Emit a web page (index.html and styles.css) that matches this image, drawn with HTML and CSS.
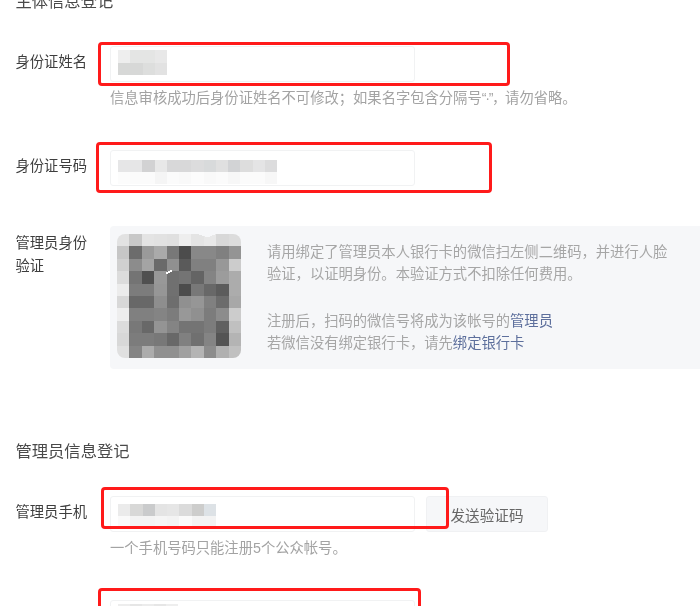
FILE: index.html
```html
<!DOCTYPE html>
<html lang="zh-CN">
<head>
<meta charset="utf-8">
<title>主体信息登记</title>
<link rel="stylesheet" href="styles.css">
</head>
<body>
<main class="page">
  <h2 class="section-title section-title--first">主体信息登记</h2>

  <div class="row">
    <div class="label">身份证姓名</div>
    <div class="field">
      <div class="input">
        <svg class="mosaic" width="49" height="25" viewBox="0 0 49 25" shape-rendering="crispEdges" aria-hidden="true">
          <rect x="0" y="0" width="12.25" height="12.5" fill="#eeeeee"/><rect x="12.25" y="0" width="12.25" height="12.5" fill="#e4e5e4"/><rect x="24.5" y="0" width="12.25" height="12.5" fill="#e4e5e4"/><rect x="36.75" y="0" width="12.25" height="12.5" fill="#e8e8e8"/>
          <rect x="0" y="12.5" width="12.25" height="12.5" fill="#d7d8d7"/><rect x="12.25" y="12.5" width="12.25" height="12.5" fill="#d7d8d7"/><rect x="24.5" y="12.5" width="12.25" height="12.5" fill="#dddedd"/><rect x="36.75" y="12.5" width="12.25" height="12.5" fill="#e2e2e2"/>
        </svg>
      </div>
      <p class="help">信息审核成功后身份证姓名不可修改；如果名字包含分隔号<span class="tight">“·”，</span>请勿省略。</p>
    </div>
  </div>

  <div class="row row--id">
    <div class="label">身份证号码</div>
    <div class="field">
      <div class="input">
        <svg class="mosaic mosaic--id" width="159" height="24" viewBox="0 0 13 2" preserveAspectRatio="none" shape-rendering="crispEdges" aria-hidden="true">
          <rect x="0" y="0" width="1" height="1" fill="#e6e6e7"/><rect x="1" y="0" width="1" height="1" fill="#e6e6e7"/><rect x="2" y="0" width="1" height="1" fill="#d2d2d3"/><rect x="3" y="0" width="1" height="1" fill="#e8e8e8"/><rect x="4" y="0" width="1" height="1" fill="#d8d8d9"/><rect x="5" y="0" width="1" height="1" fill="#d8d8d9"/><rect x="6" y="0" width="1" height="1" fill="#dcdcdd"/><rect x="7" y="0" width="1" height="1" fill="#d8dadb"/><rect x="8" y="0" width="1" height="1" fill="#e0e0e0"/><rect x="9" y="0" width="1" height="1" fill="#d2d3d5"/><rect x="10" y="0" width="1" height="1" fill="#dddddd"/><rect x="11" y="0" width="1" height="1" fill="#e4e4e5"/><rect x="12" y="0" width="1" height="1" fill="#dcdcdd"/>
          <rect x="0" y="1" width="1" height="1" fill="#fcfcfc"/><rect x="1" y="1" width="1" height="1" fill="#fbfbfb"/><rect x="2" y="1" width="1" height="1" fill="#fbfbfb"/><rect x="3" y="1" width="1" height="1" fill="#f5f5f5"/><rect x="4" y="1" width="1" height="1" fill="#fbfbfb"/><rect x="5" y="1" width="1" height="1" fill="#f9f9f9"/><rect x="6" y="1" width="1" height="1" fill="#fcfcfc"/><rect x="7" y="1" width="1" height="1" fill="#f9f9f9"/><rect x="8" y="1" width="1" height="1" fill="#fbfbfb"/><rect x="9" y="1" width="1" height="1" fill="#f7f7f7"/><rect x="10" y="1" width="1" height="1" fill="#fbfbfb"/><rect x="11" y="1" width="1" height="1" fill="#fbfbfb"/><rect x="12" y="1" width="1" height="1" fill="#f7f7f7"/>
        </svg>
      </div>
    </div>
  </div>

  <div class="row row--verify">
    <div class="label label--multi">管理员身份<br>验证</div>
    <div class="panel">
      <svg class="qr" width="124" height="124" viewBox="0 0 10 10" shape-rendering="crispEdges" aria-hidden="true">
        <g>
          <rect x="0" y="0" width="1" height="1" fill="#e2e2e2"/><rect x="1" y="0" width="1" height="1" fill="#c8c8c8"/><rect x="2" y="0" width="1" height="1" fill="#e4e4e4"/><rect x="3" y="0" width="1" height="1" fill="#e2e2e2"/><rect x="4" y="0" width="1" height="1" fill="#e0e0e0"/><rect x="5" y="0" width="1" height="1" fill="#eeeeee"/><rect x="6" y="0" width="1" height="1" fill="#e4e4e4"/><rect x="7" y="0" width="1" height="1" fill="#e8e8e8"/><rect x="8" y="0" width="1" height="1" fill="#d8d8d8"/><rect x="9" y="0" width="1" height="1" fill="#dcdcdc"/>
          <rect x="0" y="1" width="1" height="1" fill="#c6c6c6"/><rect x="1" y="1" width="1" height="1" fill="#6c6c6c"/><rect x="2" y="1" width="1" height="1" fill="#9a9a9a"/><rect x="3" y="1" width="1" height="1" fill="#aaaaaa"/><rect x="4" y="1" width="1" height="1" fill="#787878"/><rect x="5" y="1" width="1" height="1" fill="#4c4c4c"/><rect x="6" y="1" width="1" height="1" fill="#888888"/><rect x="7" y="1" width="1" height="1" fill="#888888"/><rect x="8" y="1" width="1" height="1" fill="#808080"/><rect x="9" y="1" width="1" height="1" fill="#949494"/>
          <rect x="0" y="2" width="1" height="1" fill="#d0d0d0"/><rect x="1" y="2" width="1" height="1" fill="#8c8c8c"/><rect x="2" y="2" width="1" height="1" fill="#a4a4a4"/><rect x="3" y="2" width="1" height="1" fill="#6a6a6a"/><rect x="4" y="2" width="1" height="1" fill="#909090"/><rect x="5" y="2" width="1" height="1" fill="#5a5a5a"/><rect x="6" y="2" width="1" height="1" fill="#808080"/><rect x="7" y="2" width="1" height="1" fill="#808080"/><rect x="8" y="2" width="1" height="1" fill="#989898"/><rect x="9" y="2" width="1" height="1" fill="#cccccc"/>
          <rect x="0" y="3" width="1" height="1" fill="#dcdcdc"/><rect x="1" y="3" width="1" height="1" fill="#747474"/><rect x="2" y="3" width="1" height="1" fill="#505050"/><rect x="3" y="3" width="1" height="1" fill="#989898"/><rect x="4" y="3" width="1" height="1" fill="#707070"/><rect x="5" y="3" width="1" height="1" fill="#747474"/><rect x="6" y="3" width="1" height="1" fill="#646464"/><rect x="7" y="3" width="1" height="1" fill="#848484"/><rect x="8" y="3" width="1" height="1" fill="#9c9c9c"/><rect x="9" y="3" width="1" height="1" fill="#acacac"/>
          <rect x="0" y="4" width="1" height="1" fill="#ececec"/><rect x="1" y="4" width="1" height="1" fill="#7c7c7c"/><rect x="2" y="4" width="1" height="1" fill="#7c7c7c"/><rect x="3" y="4" width="1" height="1" fill="#969696"/><rect x="4" y="4" width="1" height="1" fill="#707070"/><rect x="5" y="4" width="1" height="1" fill="#4c4c4c"/><rect x="6" y="4" width="1" height="1" fill="#787878"/><rect x="7" y="4" width="1" height="1" fill="#686868"/><rect x="8" y="4" width="1" height="1" fill="#5c5c5c"/><rect x="9" y="4" width="1" height="1" fill="#acacac"/>
          <rect x="0" y="5" width="1" height="1" fill="#d8d8d8"/><rect x="1" y="5" width="1" height="1" fill="#686868"/><rect x="2" y="5" width="1" height="1" fill="#686868"/><rect x="3" y="5" width="1" height="1" fill="#8e8e8e"/><rect x="4" y="5" width="1" height="1" fill="#6e6e6e"/><rect x="5" y="5" width="1" height="1" fill="#909090"/><rect x="6" y="5" width="1" height="1" fill="#969696"/><rect x="7" y="5" width="1" height="1" fill="#808080"/><rect x="8" y="5" width="1" height="1" fill="#6c6c6c"/><rect x="9" y="5" width="1" height="1" fill="#a8a8a8"/>
          <rect x="0" y="6" width="1" height="1" fill="#eeeeee"/><rect x="1" y="6" width="1" height="1" fill="#808080"/><rect x="2" y="6" width="1" height="1" fill="#808080"/><rect x="3" y="6" width="1" height="1" fill="#848484"/><rect x="4" y="6" width="1" height="1" fill="#7c7c7c"/><rect x="5" y="6" width="1" height="1" fill="#989898"/><rect x="6" y="6" width="1" height="1" fill="#909090"/><rect x="7" y="6" width="1" height="1" fill="#7c7c7c"/><rect x="8" y="6" width="1" height="1" fill="#8c8c8c"/><rect x="9" y="6" width="1" height="1" fill="#cccccc"/>
          <rect x="0" y="7" width="1" height="1" fill="#dcdcdc"/><rect x="1" y="7" width="1" height="1" fill="#787878"/><rect x="2" y="7" width="1" height="1" fill="#686868"/><rect x="3" y="7" width="1" height="1" fill="#949494"/><rect x="4" y="7" width="1" height="1" fill="#848484"/><rect x="5" y="7" width="1" height="1" fill="#747474"/><rect x="6" y="7" width="1" height="1" fill="#747474"/><rect x="7" y="7" width="1" height="1" fill="#7c7c7c"/><rect x="8" y="7" width="1" height="1" fill="#606060"/><rect x="9" y="7" width="1" height="1" fill="#c0c0c0"/>
          <rect x="0" y="8" width="1" height="1" fill="#d8d8d8"/><rect x="1" y="8" width="1" height="1" fill="#7c7c7c"/><rect x="2" y="8" width="1" height="1" fill="#7c7c7c"/><rect x="3" y="8" width="1" height="1" fill="#787878"/><rect x="4" y="8" width="1" height="1" fill="#686868"/><rect x="5" y="8" width="1" height="1" fill="#808080"/><rect x="6" y="8" width="1" height="1" fill="#707070"/><rect x="7" y="8" width="1" height="1" fill="#848484"/><rect x="8" y="8" width="1" height="1" fill="#545454"/><rect x="9" y="8" width="1" height="1" fill="#b4b4b4"/>
          <rect x="0" y="9" width="1" height="1" fill="#e0e0e0"/><rect x="1" y="9" width="1" height="1" fill="#848484"/><rect x="2" y="9" width="1" height="1" fill="#acacac"/><rect x="3" y="9" width="1" height="1" fill="#909090"/><rect x="4" y="9" width="1" height="1" fill="#909090"/><rect x="5" y="9" width="1" height="1" fill="#a0a0a0"/><rect x="6" y="9" width="1" height="1" fill="#b4b4b4"/><rect x="7" y="9" width="1" height="1" fill="#8c8c8c"/><rect x="8" y="9" width="1" height="1" fill="#b0b0b0"/><rect x="9" y="9" width="1" height="1" fill="#c0c0c0"/>
        </g>
        <path class="qr-notch" d="M6.2 -0.1L7.3 0.28L8.2 -0.1Z"/>
        <path class="qr-glint" d="M3.95 3.2L4.4 2.95"/>
      </svg>
      <div class="panel-text">
        <p>请用绑定了管理员本人银行卡的微信扫左侧二维码，并进行人脸验证，以证明身份。本验证方式不扣除任何费用。</p>
        <p class="panel-note">注册后，扫码的微信号将成为该帐号的<a class="link" href="#">管理员</a><br>若微信没有绑定银行卡，请先<a class="link" href="#">绑定银行卡</a></p>
      </div>
    </div>
  </div>

  <h2 class="section-title section-title--second">管理员信息登记</h2>

  <div class="row">
    <div class="label">管理员手机</div>
    <div class="field">
      <div class="input-group">
        <div class="input">
          <svg class="mosaic mosaic--phone" width="98" height="24" viewBox="0 0 8 2" preserveAspectRatio="none" shape-rendering="crispEdges" aria-hidden="true">
            <rect x="0" y="0" width="1" height="1" fill="#ebebeb"/><rect x="1" y="0" width="1" height="1" fill="#d8d8d7"/><rect x="2" y="0" width="1" height="1" fill="#cacbcc"/><rect x="3" y="0" width="1" height="1" fill="#e4e4e4"/><rect x="4" y="0" width="1" height="1" fill="#e6e6e6"/><rect x="5" y="0" width="1" height="1" fill="#dbdbdb"/><rect x="6" y="0" width="1" height="1" fill="#cdcdcc"/><rect x="7" y="0" width="1" height="1" fill="#dde2e6"/>
            <rect x="0" y="1" width="1" height="1" fill="#fafafa"/><rect x="1" y="1" width="1" height="1" fill="#f3f3f3"/><rect x="2" y="1" width="1" height="1" fill="#f3f3f3"/><rect x="3" y="1" width="1" height="1" fill="#f5f5f5"/><rect x="4" y="1" width="1" height="1" fill="#f3f3f3"/><rect x="5" y="1" width="1" height="1" fill="#fafafa"/><rect x="6" y="1" width="1" height="1" fill="#f3f3f3"/><rect x="7" y="1" width="1" height="1" fill="#f3f3f3"/>
          </svg>
        </div>
        <button class="send" type="button">发送验证码</button>
      </div>
      <p class="help">一个手机号码只能注册5个公众帐号。</p>
    </div>
  </div>

  <div class="row row--last">
    <div class="label"></div>
    <div class="field">
      <div class="input">
        <svg class="mosaic" width="60" height="12" viewBox="0 0 5 1" preserveAspectRatio="none" shape-rendering="crispEdges" aria-hidden="true">
          <rect x="0" y="0" width="1" height="1" fill="#ededed"/><rect x="1" y="0" width="1" height="1" fill="#e6e6e6"/><rect x="2" y="0" width="1" height="1" fill="#ececec"/><rect x="3" y="0" width="1" height="1" fill="#e6e6e6"/><rect x="4" y="0" width="1" height="1" fill="#eeeeee"/>
        </svg>
      </div>
    </div>
  </div>
</main>

<div class="mark mark--name"></div>
<div class="mark mark--id"></div>
<div class="mark mark--phone"></div>
<div class="mark mark--last"></div>
</body>
</html>
```

FILE: styles.css
```css
html {
  overflow: hidden;
}

body {
  position: relative;
  margin: 0;
  height: 606px;
  overflow: hidden;
  background: #ffffff;
  font-family: "Liberation Sans", "Noto Sans CJK SC", sans-serif;
  font-size: 14.3px;
  color: #3e3e3e;
}

.page {
  margin-top: -11px;
  padding-left: 15.5px;
  filter: blur(0.45px);
}

.section-title {
  margin: 0;
  font-size: 16.3px;
  font-weight: 400;
  line-height: 24px;
  color: #4a4a4a;
}

.section-title--first {
  margin-bottom: 33px;
}

.section-title--second {
  margin-top: 70px;
  margin-bottom: 33px;
}

.row {
  display: flex;
}

.row--id {
  margin-top: 41px;
}

.row--verify {
  margin-top: 40px;
}

.row--last {
  margin-top: 41px;
}

.label {
  flex: none;
  width: 94.5px;
  line-height: 32px;
}

.label--multi {
  padding-top: 6px;
  line-height: 23px;
}

.field {
  flex: none;
  width: 438px;
}

.input {
  box-sizing: border-box;
  flex: none;
  width: 305px;
  height: 36px;
  padding: 3px 0 0 7px;
  background: #ffffff;
  border: 1px solid #f1f2f3;
  border-radius: 3px;
}

.mosaic {
  display: block;
}

.mosaic--id {
  margin-top: 6px;
}

.mosaic--phone {
  margin-top: 4px;
}

.help {
  margin: 5px 0 0;
  line-height: 22px;
  color: #a3a3a3;
  white-space: nowrap;
}

.tight {
  letter-spacing: -1.3px;
}

.input-group {
  display: flex;
  gap: 11px;
}

.send {
  flex: none;
  box-sizing: border-box;
  width: 122px;
  height: 36px;
  padding: 0;
  background: #f6f7f9;
  border: 1px solid #f0f1f3;
  border-radius: 3px;
  font: inherit;
  font-size: 14.6px;
  color: #666666;
}

.panel {
  display: flex;
  flex: none;
  box-sizing: border-box;
  width: 600px;
  height: 143px;
  padding: 8px 7px;
  background: #f6f7f9;
  border-radius: 4px;
}

.qr {
  flex: none;
  display: block;
  border-radius: 8px;
}

.qr-notch {
  fill: #f6f7f9;
}

.qr-glint {
  fill: none;
  stroke: #ffffff;
  stroke-width: 0.13;
}

.panel-text {
  flex: none;
  width: 410px;
  margin: 7px 0 0 26px;
  line-height: 22px;
  color: #a6a6a6;
}

.panel-text p {
  margin: 0;
}

.panel-text .panel-note {
  margin-top: 25px;
}

.link {
  color: #5d6f9c;
  text-decoration: none;
}

.mark {
  position: absolute;
  box-sizing: border-box;
  border: 3px solid #ff1a1a;
  border-radius: 4px;
  filter: blur(0.3px);
}

.mark--name {
  left: 98px;
  top: 42px;
  width: 412px;
  height: 44px;
}

.mark--id {
  left: 96px;
  top: 142px;
  width: 396px;
  height: 51px;
}

.mark--phone {
  left: 101px;
  top: 487px;
  width: 348px;
  height: 42px;
}

.mark--last {
  left: 98px;
  top: 588px;
  width: 323px;
  height: 60px;
}
```
